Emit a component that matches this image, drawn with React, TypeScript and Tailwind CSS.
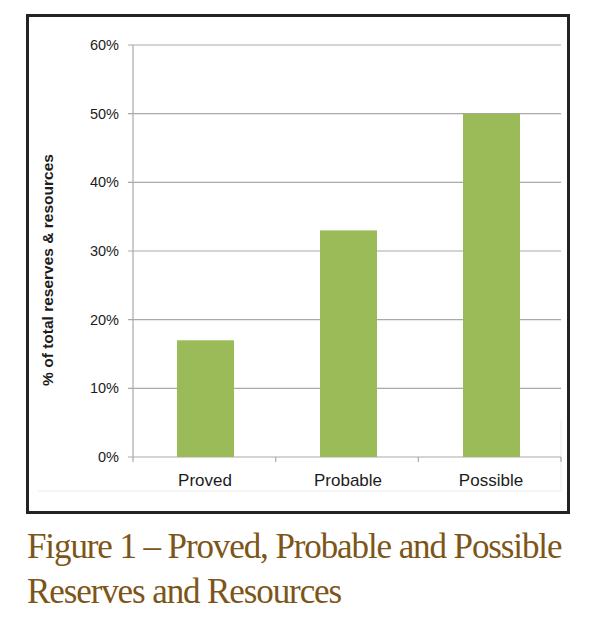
import React from 'react';

const bars = [
  { label: 'Proved', value: 17, x: 177, cx: 205 },
  { label: 'Probable', value: 33, x: 320, cx: 348 },
  { label: 'Possible', value: 50, x: 463, cx: 491 },
];

const ticks = [0, 10, 20, 30, 40, 50, 60];

// chart coordinates are page pixels (viewBox starts at the inner corner of the frame)
const y0 = 457;
const perPct = 6.8667;
const yOf = (v: number) => y0 - v * perPct;

function ReservesChart() {
  return (
    <svg width={538} height={494} viewBox="29 17 538 494" className="block">
      {/* faint plot area edge */}
      <line x1={38} y1={491} x2={561} y2={491} stroke="#ececec" strokeWidth={1} />
      <line x1={561} y1={420} x2={561} y2={491} stroke="#ececec" strokeWidth={1} />

      {ticks.map((t) => (
        <g key={t}>
          <line x1={128} y1={yOf(t)} x2={561} y2={yOf(t)} stroke="#a9a9a9" strokeWidth={1.2} />
          <text
            x={119}
            y={yOf(t) + 5}
            textAnchor="end"
            fontSize={14.5}
            fill="#1c1c1c"
            fontFamily="'Liberation Sans', Arial, sans-serif"
          >
            {`${t}%`}
          </text>
        </g>
      ))}

      <line x1={133} y1={yOf(60)} x2={133} y2={462} stroke="#a9a9a9" strokeWidth={1.2} />
      {[275.7, 418.3, 561].map((x) => (
        <line key={x} x1={x} y1={y0} x2={x} y2={462} stroke="#a9a9a9" strokeWidth={1.2} />
      ))}

      {bars.map((b) => (
        <g key={b.label}>
          <rect x={b.x} y={yOf(b.value)} width={57} height={y0 - yOf(b.value)} fill="#9bbb59" />
          <text
            x={b.cx}
            y={486}
            textAnchor="middle"
            fontSize={17}
            fill="#1c1c1c"
            fontFamily="'Liberation Sans', Arial, sans-serif"
          >
            {b.label}
          </text>
        </g>
      ))}

      <text
        transform="translate(53 270) rotate(-90)"
        textAnchor="middle"
        fontSize={15.5}
        fontWeight="bold"
        fill="#1c1c1c"
        fontFamily="'Liberation Sans', Arial, sans-serif"
      >
        % of total reserves &amp; resources
      </text>
    </svg>
  );
}

export default function App() {
  return (
    <div className="w-[600px] h-[621px] bg-white overflow-hidden">
      <div className="ml-[26px] mt-[14px] w-[544px] h-[500px] border-[3px] border-[#232323] bg-white">
        <ReservesChart />
      </div>
      <p
        className="ml-[27px] mt-[10px] text-[35px] leading-[45px] tracking-[-1.1px] text-[#7d5518]"
        style={{ fontFamily: "'Liberation Serif', 'Times New Roman', serif" }}
      >
        Figure 1 – Proved, Probable and Possible
        <br />
        Reserves and Resources
      </p>
    </div>
  );
}
